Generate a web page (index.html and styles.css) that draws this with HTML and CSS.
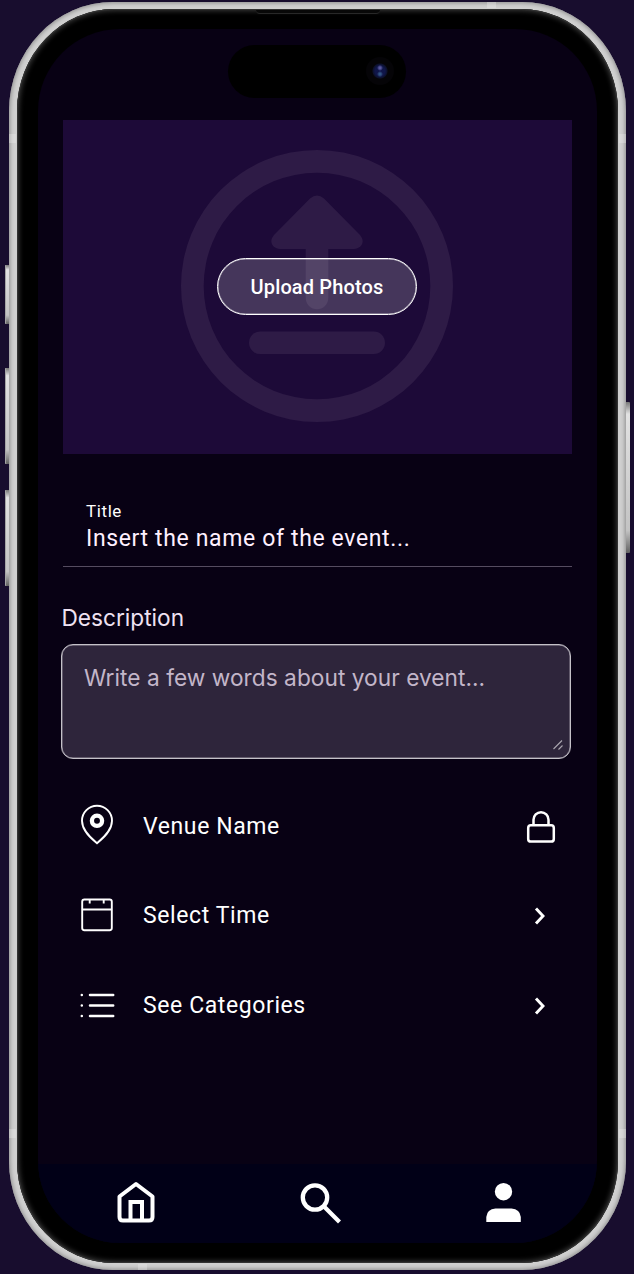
FILE: index.html
```html
<!DOCTYPE html>
<html lang="en">
<head>
<meta charset="utf-8">
<title>Create event</title>
<link rel="stylesheet" href="styles.css">
</head>
<body>
<div class="phone">
  <span class="key key-action"></span>
  <span class="key key-up"></span>
  <span class="key key-down"></span>
  <span class="key key-power"></span>
  <div class="metal">
    <span class="seam seam-top"></span><span class="seam seam-bottom"></span>
    <span class="seam seam-lt"></span><span class="seam seam-rt"></span>
    <span class="seam seam-lb"></span><span class="seam seam-rb"></span>
    <div class="bezel">
      <span class="speaker"></span>
      <div class="screen">
        <div class="island"><span class="lens"></span></div>
        <main class="content">
          <section class="upload">
            <svg class="upload-art" viewBox="0 0 272 272">
              <g fill="#2e1b46">
                <path fill-rule="evenodd" d="M136 0a136 136 0 1 0 0 272a136 136 0 1 0 0-272zM136 22.7a113.3 113.3 0 1 1 0 226.6a113.3 113.3 0 1 1 0-226.6z"/>
                <path d="M129 48.500Q136 42.500 143 48.500L179 85C185 92 180 99 173 99H147.300V148A11.300 11.300 0 0 1 124.700 148V99H99C92 99 87 92 93 85Z"/>
                <rect x="68" y="181.500" width="136" height="22.500" rx="11.250"/>
              </g>
            </svg>
            <button class="upload-button">Upload Photos</button>
          </section>
          <section class="title-field">
            <span class="title-label">Title</span>
            <span class="title-value">Insert the name of the event...</span>
          </section>
          <section class="description">
            <label class="description-label">Description</label>
            <div class="description-box">
              <span class="placeholder">Write a few words about your event...</span>
              <svg class="grip" viewBox="0 0 12 12"><path d="M1.500 10L10 1.500M6.500 10.500L10.500 6.500" stroke="#aaa5ae" stroke-width="1.100" fill="none"/></svg>
            </div>
          </section>
          <ul class="options">
            <li class="option">
              <svg class="option-icon" viewBox="0 0 36 42" fill="none" stroke="#fff" stroke-width="1.900"><path d="M18 39.200C13 35 3 27 3 16.800A15 15 0 0 1 33 16.800C33 27 23 35 18 39.200Z"/><circle cx="18" cy="16.800" r="5.100" stroke-width="4.300"/></svg>
              <span class="option-text venue">Venue Name</span>
              <svg class="lock" viewBox="0 0 30 34" fill="none" stroke="#fff" stroke-width="2.500"><rect x="2.200" y="15.200" width="25.600" height="16.400" rx="2.700"/><path d="M7.500 15V9.700A7.500 7.500 0 0 1 22.500 9.700V15"/></svg>
            </li>
            <li class="option">
              <svg class="option-icon" viewBox="0 0 36 42" fill="none" stroke="#fff" stroke-width="1.900"><rect x="3.200" y="5.500" width="29.600" height="30.800" rx="2.200"/><path d="M3 15.500H33M10.700 5.500V9.500M24.700 5.500V9.500"/></svg>
              <span class="option-text time">Select Time</span>
              <svg class="chevron" viewBox="0 0 14 20"><path d="M3 2.500L10 10L3 17.500" fill="none" stroke="#fff" stroke-width="2.900"/></svg>
            </li>
            <li class="option">
              <svg class="option-icon" viewBox="0 0 36 42" fill="none" stroke="#fff" stroke-width="2.500" stroke-linecap="round"><path d="M11 12H34.200M11 22.500H34.200M11 33H34.200M2.800 12h.01M2.800 22.500h.01M2.800 33h.01"/></svg>
              <span class="option-text categories">See Categories</span>
              <svg class="chevron" viewBox="0 0 14 20"><path d="M3 2.500L10 10L3 17.500" fill="none" stroke="#fff" stroke-width="2.900"/></svg>
            </li>
          </ul>
        </main>
        <nav class="tabs">
          <svg class="tab" viewBox="0 0 44 44" fill="none" stroke="#fff" stroke-width="4"><path d="M22 4L38.500 16.500V37Q38.500 40.500 35 40.500H9Q5.500 40.500 5.500 37V16.500Z" stroke-linejoin="round"/><path d="M16.500 40V22H28V40"/></svg>
          <svg class="tab" viewBox="0 0 44 44" fill="none" stroke="#fff"><circle cx="17" cy="17.500" r="12.200" stroke-width="4.300"/><path d="M26 26.500L41.500 42" stroke-width="4.300"/></svg>
          <svg class="tab" viewBox="0 0 44 44" fill="#fff"><circle cx="21.500" cy="11.700" r="8.700"/><path d="M4.300 42V37Q5 29 13.500 28.500H29.500Q38 29 38.800 37V42Z"/></svg>
        </nav>
      </div>
    </div>
  </div>
</div>
</body>
</html>
```
FILE: styles.css
```css
* { box-sizing: border-box; }
body { margin: 0; height: 1274px; overflow: hidden; background: #180d2e; font-family: Roboto, sans-serif; color: #fff; }
.phone { position: relative; width: 634px; height: 1274px; padding: 2px 8.5px 4px 9px; }
.metal { position: relative; height: 1268px; padding: 7px 8px; border-radius: 104px / 109px; background: #d0d0d0; box-shadow: inset 0 0 4px 1px #8c8c8c; }
.bezel { position: relative; height: 1254px; padding: 20px 20.5px; border-radius: 97px / 102px; background: #000; box-shadow: inset 0 0 0 1px #333, inset 0 0 5px 2px #383838; }
.screen { height: 1214px; display: flex; flex-direction: column; overflow: hidden; border-radius: 82px; background: #080114; }
.key { position: absolute; width: 6px; border-radius: 1px; background: linear-gradient(#777, #e2e2e2 8%, #c3c3c3 85%, #626262); box-shadow: inset 1px 0 #a5a5a5; }
.key-action { left: 5px; top: 265px; height: 59px; }
.key-up { left: 5px; top: 368px; height: 96px; }
.key-down { left: 5px; top: 490px; height: 96px; }
.key-power { right: 4.500px; top: 402px; height: 151px; }
.seam { position: absolute; background: rgba(235,235,235,.35); }
.seam-top, .seam-bottom { width: 9px; height: 6px; }
.seam-top { top: 0; left: 478px; }
.seam-bottom { bottom: 0; left: 129px; }
.seam-lt, .seam-rt, .seam-lb, .seam-rb { width: 7px; height: 9px; }
.seam-lt, .seam-lb { left: 0; }
.seam-rt, .seam-rb { right: 0; }
.seam-lt, .seam-rt { top: 132px; }
.seam-lb, .seam-rb { top: 1127px; }
.speaker { position: absolute; top: 1px; left: 239px; width: 124px; height: 4px; border-bottom: 1px solid #282828; border-radius: 0 0 5px 5px; background: #080808; }
.island { display: flex; flex: none; align-items: center; justify-content: flex-end; width: 178px; height: 53px; margin: 15.500px auto 0 190.500px; padding-right: 12px; border-radius: 27px; background: #000; }
.lens { width: 28px; height: 28px; border-radius: 50%; background: radial-gradient(circle at 50% 39%, #57579d 0 1px, transparent 3px), radial-gradient(circle at 50% 61%, #315383 0 1px, transparent 3px), radial-gradient(circle, #10164a 0 5px, #0c102a 7px, #050407 8px); }
.content { flex: 1; padding: 22.500px 25px 0 25px; }
.upload { display: grid; place-items: center; width: 509px; height: 333.500px; background: #1d0a38; }
.upload-art { grid-area: 1 / 1; width: 272px; height: 272px; margin-bottom: 1px; }
.upload-button { grid-area: 1 / 1; width: 200px; height: 57px; margin-right: 1px; padding: 0 0 0 1px; border: 1px solid #fff; border-radius: 29px; background: rgba(255,255,255,.18); box-shadow: inset 0 0 0 .5px rgba(255,255,255,.6); color: #fff; font: 500 20px/24px Roboto, sans-serif; letter-spacing: .14px; }
.title-field { display: flex; flex-direction: column; width: 509px; height: 113px; padding: 46px 0 0 23.500px; border-bottom: 1px solid #554c60; white-space: nowrap; }
.title-label { font-size: 17px; line-height: 22px; letter-spacing: .6px; }
.title-value { margin-top: 2px; font-size: 23px; line-height: 30px; letter-spacing: .64px; color: #fff0ff; }
.description { margin-left: -2px; padding-top: 36px; }
.description-label { display: block; height: 29px; padding-left: 1px; font: 400 22.700px/29px Inter, sans-serif; letter-spacing: -.02px; color: #efe2f2; }
.description-box { display: flex; flex-wrap: wrap; align-content: space-between; justify-content: flex-end; width: 510px; height: 115px; margin-top: 12px; padding: 19px 6px 7px 22.500px; border: 1px solid #c4c1c8; box-shadow: inset 0 0 0 .5px #9993a0; border-radius: 12px; background: #2e253b; }
.placeholder { width: 100%; font: 400 22.700px/28px Inter, sans-serif; letter-spacing: .03px; color: #c3b6c9; white-space: nowrap; }
.grip { width: 12px; height: 12px; }
.options { margin: 23.500px 0 0; padding: 0; list-style: none; }
.option { display: flex; align-items: center; height: 89.500px; padding: 0 16px 0 15.500px; white-space: nowrap; }
.option-icon { width: 36px; height: 42px; margin: 0 28.500px 3px .5px; }
.option-text { flex: 1; font-size: 23px; line-height: 30px; letter-spacing: .6px; }
.lock { width: 30px; height: 34px; }
.chevron { width: 14px; height: 20px; margin-right: 9px; }
.tabs { display: flex; flex: none; justify-content: space-between; height: 79px; padding: 16px 71px 0 76px; background: #010017; }
.tab { width: 44px; height: 44px; }
```
